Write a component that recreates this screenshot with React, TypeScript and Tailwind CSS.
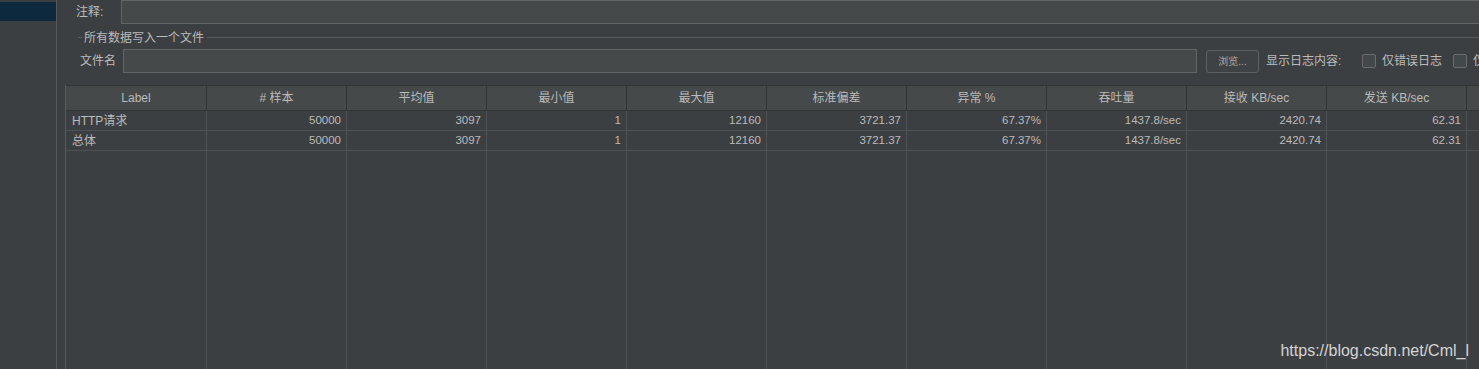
import React from "react";

const cols = [
  "Label",
  "# 样本",
  "平均值",
  "最小值",
  "最大值",
  "标准偏差",
  "异常 %",
  "吞吐量",
  "接收 KB/sec",
  "发送 KB/sec",
  "",
];

const rows = [
  ["HTTP请求", "50000", "3097", "1", "12160", "3721.37", "67.37%", "1437.8/sec", "2420.74", "62.31", ""],
  ["总体", "50000", "3097", "1", "12160", "3721.37", "67.37%", "1437.8/sec", "2420.74", "62.31", ""],
];

const font = { fontFamily: '"Liberation Sans", "Noto Sans CJK SC", sans-serif' };

export default function App() {
  return (
    <div
      className="relative w-[1479px] h-[369px] overflow-hidden bg-[#3c3f41] flex text-[12px] text-[#bbbbbb]"
      style={font}
    >
      {/* left tree panel */}
      <div className="w-[57px] shrink-0 border-r border-[#55585a]">
        <div className="mt-[2px] h-[19px] bg-[#0d293e]" />
      </div>

      {/* main panel */}
      <div className="flex-1 min-w-0 flex flex-col">
        {/* comment row */}
        <div className="h-[24px] flex items-center shrink-0">
          <div className="w-[64px] shrink-0 pl-[19px] whitespace-nowrap">注释:</div>
          <div className="flex-1 h-[24px] -mr-[2px] border border-[#646464] bg-[#45494a]" />
        </div>

        {/* group title */}
        <div className="h-[25px] pt-[2px] flex items-center shrink-0">
          <div className="ml-[21px] w-[4px] h-px bg-[#5a5d5f]" />
          <div className="ml-[2px] whitespace-nowrap">所有数据写入一个文件</div>
          <div className="ml-[3px] flex-1 h-px bg-[#5a5d5f]" />
        </div>

        {/* file row */}
        <div className="h-[24px] flex items-center shrink-0 whitespace-nowrap">
          <div className="w-[66px] shrink-0 pl-[23px]">文件名</div>
          <div className="w-[1074px] shrink-0 h-[24px] border border-[#646464] bg-[#45494a]" />
          <div className="ml-[9px] shrink-0 w-[53px] h-[23px] rounded-[3px] border border-[#5e6060] bg-[#3f4244] flex items-center justify-center text-[10px] text-[#a9a9a9]">
            浏览...
          </div>
          <div className="ml-[7px] shrink-0 w-[96px]">显示日志内容:</div>
          <div className="w-[14px] shrink-0 h-[14px] rounded-[2px] border border-[#6b6b6b] bg-[#43494a]" />
          <div className="ml-[6px] shrink-0 w-[71px]">仅错误日志</div>
          <div className="w-[14px] shrink-0 h-[14px] rounded-[2px] border border-[#6b6b6b] bg-[#43494a]" />
          <div className="ml-[6px] shrink-0">仅成功日志</div>
        </div>

        {/* table */}
        <div className="mt-[12px] ml-[8px] flex-1 flex flex-col min-h-0 border-l border-[#5a5d5f]">
          {/* header */}
          <div className="flex h-[26px] shrink-0 border-t border-b border-[#323436] bg-[#45494a]">
            {cols.map((c, i) => (
              <div
                key={i}
                className={`${i === 0 ? "w-[141px]" : "w-[140px]"} shrink-0 border-r border-[#323436] flex items-center justify-center whitespace-nowrap`}
              >
                {c}
              </div>
            ))}
          </div>
          {/* body */}
          <div className="flex flex-1 min-h-0">
            {cols.map((_, ci) => (
              <div
                key={ci}
                className={`${ci === 0 ? "w-[141px]" : "w-[140px]"} shrink-0 border-r border-[#4f5254] flex flex-col`}
              >
                {rows.map((r, ri) => (
                  <div
                    key={ri}
                    className={`h-[20px] border-b border-[#4f5254] flex items-center whitespace-nowrap ${
                      ci === 0 ? "pl-[6px] text-[12px]" : "justify-end pr-[5px] text-[11.5px]"
                    }`}
                  >
                    {r[ci]}
                  </div>
                ))}
              </div>
            ))}
          </div>
        </div>
      </div>

      {/* watermark */}
      <div
        className="absolute right-[10px] bottom-[9px] text-[16px] leading-[18px] text-[#d4d4d4]"
        style={{ fontFamily: '"Liberation Sans", Arial, sans-serif' }}
      >
        https://blog.csdn.net/Cml_l
      </div>
    </div>
  );
}
